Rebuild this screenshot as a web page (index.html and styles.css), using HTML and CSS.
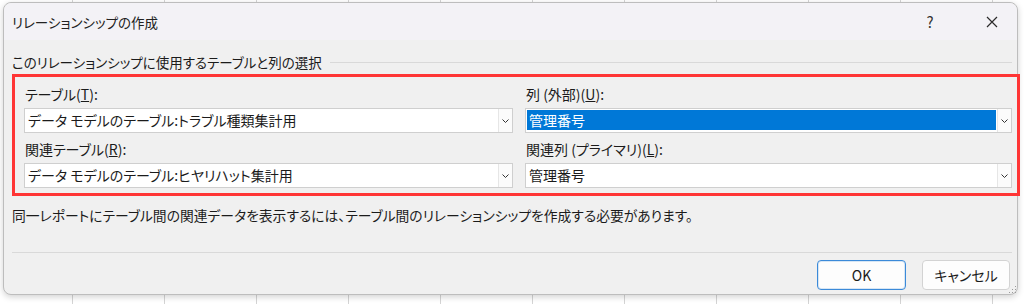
FILE: index.html
```html
<!DOCTYPE html>
<html lang="ja">

<head>
    <meta charset="UTF-8">
    <meta name="viewport" content="width=device-width, initial-scale=1.0">
    <title>リレーションシップの作成</title>
    <link rel="stylesheet" href="styles.css">
</head>

<body>
    <div class="dialog">
        <div class="titlebar">
            <span class="title">リレーションシップの作成</span>
            <div class="title-buttons">
                <span class="help">?</span>
                <span class="close">
                    <svg width="12" height="12" viewBox="0 0 12 12">
                        <path d="M1 1 L11 11 M11 1 L1 11" stroke="#2b2b2b" stroke-width="1.2" fill="none" />
                    </svg>
                </span>
            </div>
        </div>

        <div class="content">
            <div class="group-head">
                <span>このリレーションシップに使用するテーブルと列の選択</span>
                <div class="rule"></div>
            </div>

            <div class="highlight">
                <div class="field">
                    <label>テーブル(<u>T</u>):</label>
                    <div class="combo">
                        <span class="combo-text">データ モデルのテーブル:トラブル種類集計用</span>
                        <span class="combo-arrow"></span>
                    </div>
                </div>
                <div class="field">
                    <label>列 (外部)(<u>U</u>):</label>
                    <div class="combo">
                        <span class="combo-text selected">管理番号</span>
                        <span class="combo-arrow"></span>
                    </div>
                </div>
                <div class="field">
                    <label>関連テーブル(<u>R</u>):</label>
                    <div class="combo">
                        <span class="combo-text">データ モデルのテーブル:ヒヤリハット集計用</span>
                        <span class="combo-arrow"></span>
                    </div>
                </div>
                <div class="field">
                    <label>関連列 (プライマリ)(<u>L</u>):</label>
                    <div class="combo">
                        <span class="combo-text">管理番号</span>
                        <span class="combo-arrow"></span>
                    </div>
                </div>
            </div>

            <p class="note">同一レポートにテーブル間の関連データを表示するには、テーブル間のリレーションシップを作成する必要があります。</p>

            <div class="separator"></div>

            <div class="actions">
                <button class="btn primary">OK</button>
                <button class="btn">キャンセル</button>
            </div>
        </div>

        <!-- resize grip -->
        <div class="grip"></div>
    </div>
</body>

</html>
```

FILE: styles.css
```css
:root {
    --face: #f0f0f0;
    --title: #f3f2f6;
    --text: #1b1b1b;
    --line: #d9d9d9;
    --field-border: #cfcfcf;
    --red: #ff3535;
    --blue: #0078d7;
}

* {
    box-sizing: border-box;
    margin: 0;
    padding: 0;
}

body {
    font-family: "Noto Sans CJK JP", "Noto Sans", sans-serif;
    font-feature-settings: "palt";
    color: var(--text);
    width: 1024px;
    height: 304px;
    overflow: hidden;
    background-color: #ffffff;
    background-image: repeating-linear-gradient(to right, transparent 0, transparent 72px, #d4d4d4 72px, #d4d4d4 73px, transparent 73px, transparent 92px);
    padding: 2px 0 0 3px;
}

.dialog {
    position: relative;
    width: 1015px;
    height: 293px;
    background: var(--face);
    border: 1px solid #bdbdbd;
    border-radius: 8px;
    box-shadow: 0 2px 6px rgba(0, 0, 0, 0.18);
}

.titlebar {
    height: 37px;
    background: var(--title);
    border-radius: 8px 8px 0 0;
    display: flex;
    align-items: center;
    justify-content: space-between;
    padding-left: 8px;
}

.title {
    font-size: 13.5px;
    line-height: 18px;
    color: #222;
}

.title-buttons {
    display: flex;
    align-items: center;
    height: 100%;
}

.help {
    width: 40px;
    text-align: center;
    font-size: 15px;
    color: #333;
    margin-right: 19px;
}

.close {
    width: 46px;
    display: flex;
    justify-content: center;
    margin-right: 2px;
}

.content {
    padding: 12px 5px 0 8px;
}

.group-head {
    display: flex;
    align-items: center;
    gap: 8px;
    height: 20px;
    font-size: 13.5px;
}

.rule {
    flex: 1;
    height: 1px;
    background: var(--line);
}

.highlight {
    margin-top: 2px;
    width: 1008px;
    border: 3px solid var(--red);
    padding: 8px 5px 5px 9px;
    display: grid;
    grid-template-columns: 489px 487px;
    column-gap: 12px;
    row-gap: 7px;
}

.field label {
    display: block;
    font-size: 14px;
    line-height: 18px;
    margin-bottom: 5px;
    padding-left: 1px;
}

.combo {
    display: flex;
    height: 25px;
    background: #ffffff;
    border: 1px solid var(--field-border);
}

.combo-text {
    flex: 1;
    font-size: 14px;
    line-height: 20px;
    padding-left: 2px;
    margin: 1px;
    white-space: nowrap;
}

.combo-text.selected {
    background: var(--blue);
    color: #ffffff;
    margin-bottom: 2px;
}

.combo-arrow {
    width: 14px;
    border-left: 1px solid #e6e6e6;
    background: #fbfbfb url("data:image/svg+xml,%3Csvg xmlns='http://www.w3.org/2000/svg' width='7' height='4' viewBox='0 0 7 4'%3E%3Cpath d='M0.5 0.5 L3.5 3.5 L6.5 0.5' stroke='%23333' stroke-width='1' fill='none'/%3E%3C/svg%3E") no-repeat center;
}

.note {
    margin-top: 10px;
    font-size: 13.8px;
    line-height: 18px;
}

.separator {
    margin-top: 28px;
    height: 1px;
    background: var(--line);
}

.actions {
    display: flex;
    justify-content: flex-end;
    gap: 16px;
    margin-top: 7px;
    padding-right: 2px;
}

.btn {
    width: 88px;
    height: 30px;
    font-family: inherit;
    font-feature-settings: "palt";
    font-size: 14px;
    color: var(--text);
    background: #fdfdfd;
    border: 1px solid #d3d3d3;
    border-radius: 4px;
}

.btn.primary {
    width: 89px;
    border: 1px solid #3b8ad9;
    box-shadow: inset 0 0 0 1px rgba(0, 103, 192, 0.15);
}

.grip {
    position: absolute;
    right: 1px;
    bottom: 1px;
    width: 8px;
    height: 8px;
    background-image: radial-gradient(circle, #9a9a9a 0.8px, transparent 1px);
    background-size: 3px 3px;
    clip-path: polygon(100% 0, 100% 100%, 0 100%);
}
```
